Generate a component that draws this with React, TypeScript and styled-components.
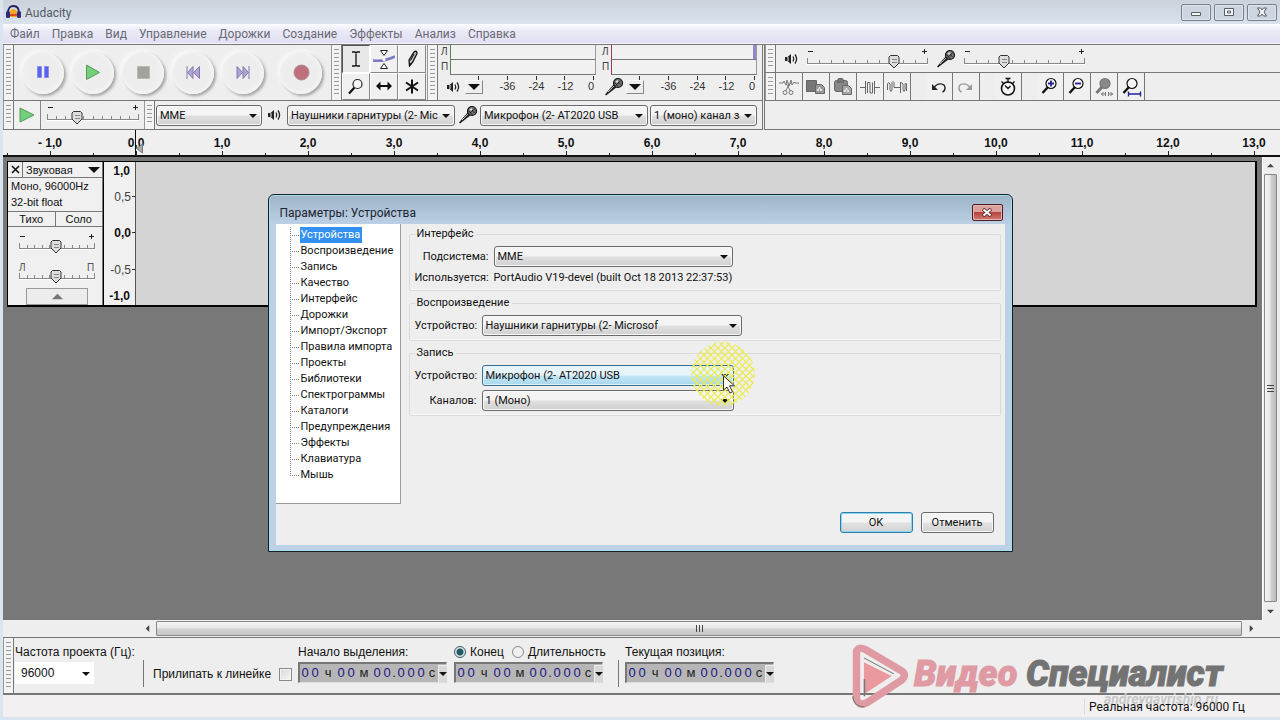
import React, { useState } from 'react';
import styled, { createGlobalStyle, css } from 'styled-components';

const UI_FONT = 'Roboto, "Noto Sans", sans-serif';
const ARIAL = '"Liberation Sans", Arial, sans-serif';

const GlobalStyle = createGlobalStyle`
  *, *::before, *::after { box-sizing: border-box; }
  body { margin: 0; background: #dbe5f0; color: #111; font: 12px/16px ${ARIAL}; }
  button, input, select { font: inherit; color: inherit; margin: 0; }
`;

const Window = styled.div`
  position: relative;
  display: flex;
  flex-direction: column;
  min-height: 100vh;
  padding: 0 0 3px 3px;
  overflow: hidden;
  background: #dbe5f0;
`;

const TitleBar = styled.header`
  display: flex;
  align-items: center;
  gap: 4px;
  height: 24px;
  padding: 0 3px 0 3px;
  background: linear-gradient(#cbd2dc, #d9e2ed);
  font: 12px/16px ${UI_FONT};
  color: #555a62;
`;

const AppTitle = styled.h1`
  flex: 1;
  margin: 0;
  padding-top: 2px;
  font: inherit;
`;

const WindowButtons = styled.div`
  display: flex;
  gap: 3px;
`;

const WindowButton = styled.button`
  display: grid;
  place-items: center;
  width: 30px;
  height: 17px;
  padding: 0;
  border: 1px solid #77808d;
  border-radius: 2px;
  background: #ccd5e0;
  box-shadow: inset 0 0 0 1px #dde4ec;
`;

const MenuBar = styled.nav`
  display: flex;
  gap: 12px;
  height: 20px;
  padding: 2px 7px 0;
  border-bottom: 1px solid #f4f4f8;
  background: linear-gradient(#fbfcff 0, #e9e9f6 40%, #e1dff2);
  font: 12px/16px ${UI_FONT};
`;

const MenuLink = styled.a`
  color: #6a6a74;
  text-decoration: none;
`;

const Docks = styled.div`
  display: flex;
  background: #eee;
  border-top: 1px solid #777;
`;

const Dock = styled.div<{ $grow?: boolean }>`
  display: flex;
  flex-direction: column;
  flex: ${(p) => (p.$grow ? '1' : 'none')};
  ${(p) => p.$grow && css`border-left: 3px double #777;`}
`;

const Bar = styled.div<{ $h: number }>`
  display: flex;
  height: ${(p) => p.$h}px;
  border-bottom: 1px solid #777;
`;

const Grip = styled.div`
  flex: none;
  width: 11px;
  border-left: 1px solid #999;
  border-right: 1px solid #777;
  background: repeating-linear-gradient(#999 0 1px, transparent 1px 4px) center 4px / 5px calc(100% - 8px) no-repeat #f3f3f3;
`;

const Transport = styled.div`
  display: flex;
  align-items: center;
  gap: 8px;
  width: 317px;
  padding-left: 8px;
  background: #eee;
`;

const RoundButton = styled.button<{ $apart?: boolean }>`
  display: grid;
  place-items: center;
  width: 42px;
  height: 42px;
  margin-left: ${(p) => (p.$apart ? 8 : 0)}px;
  padding: 0;
  border: 0;
  border-radius: 50%;
  background: radial-gradient(circle at 48% 48%, #ededed 55%, #f2f2f2 66%);
  box-shadow: 2px 2px 3px #a4a4a4, -2px -2px 4px #fafafa;
`;

const ToolGrid = styled.div`
  display: grid;
  grid-template-columns: repeat(3, 28px);
  width: 85px;
`;

const ToolButton = styled.button<{ $down?: boolean }>`
  display: grid;
  place-items: center;
  padding: 0;
  border: 1px solid;
  border-color: ${(p) => (p.$down ? '#555 #fff #fff #555' : '#fff #888 #888 #fff')};
  background: ${(p) => (p.$down ? '#e8e8e8' : '#f0f0f0')};
`;

const Meters = styled.div`
  display: flex;
  gap: 6px;
  padding: 0 5px 0 3px;
`;

const Meter = styled.section`
  width: 155px;
`;

const MeterLine = styled.div`
  display: flex;
  height: 15px;
  font-size: 10px;
  line-height: 14px;
  color: #444;
`;

const MeterLabel = styled.span`
  width: 9px;
`;

const MeterTrack = styled.span<{ $tone: string; $peak?: boolean }>`
  flex: 1;
  border: solid;
  border-width: 0 1px 1px;
  border-color: #777 #999 #777 ${(p) => p.$tone};
  background: #f1f1f1;
  ${(p) => p.$peak && css`box-shadow: inset -3px 0 #8f8ac8;`}
`;

const MeterTicks = styled.div`
  display: flex;
  justify-content: space-between;
  height: 5px;
  padding: 1px 2px 0 37px;
`;

const MeterTick = styled.i`
  width: 1px;
  background: #333;
`;

const MeterFoot = styled.div`
  display: flex;
  align-items: center;
  height: 14px;
  font-size: 11px;
  line-height: 14px;
  color: #333;
`;

const MeterIcon = styled.span`
  display: grid;
  place-items: center;
  flex: none;
  width: 24px;
`;

const MeterMenu = styled.button`
  display: grid;
  place-items: center;
  flex: none;
  width: 18px;
  height: 14px;
  margin-right: 10px;
  padding: 0;
  border: 1px solid;
  border-color: #f8f8f8 #888 #888 #f8f8f8;
  background: #eee;
`;

const MeterValue = styled.span<{ $last?: boolean }>`
  flex: none;
  align-self: flex-start;
  width: ${(p) => (p.$last ? 22 : 29)}px;
  line-height: 12px;
  text-align: center;
`;

const Mixer = styled.div`
  display: flex;
  align-items: center;
  gap: 7px;
  padding-left: 8px;
`;

const SliderBox = styled.label`
  position: relative;
  display: block;
  flex: none;
`;

const SliderInput = styled.input`
  position: absolute;
  inset: 0;
  width: 100%;
  height: 100%;
  opacity: 0;
`;

const EditTools = styled.div`
  display: flex;
  gap: 15px;
`;

const EditGroup = styled.div`
  display: flex;
`;

const EditButton = styled.button`
  display: grid;
  place-items: center;
  width: 27px;
  height: 27px;
  padding: 0;
  border: 0;
  border-right: 1px solid #777;
  background: #f0f0f0;
`;

const PlayAtSpeed = styled.button`
  display: grid;
  place-items: center;
  width: 27px;
  padding: 0;
  border: 0;
  border-right: 1px solid #888;
  background: #f0f0f0;
`;

const SpeedArea = styled.div`
  display: flex;
  align-items: center;
  width: 103px;
  padding-left: 5px;
`;

const DeviceArea = styled.div`
  display: flex;
  align-items: center;
  gap: 2px;
  padding: 0 5px 0 1px;
`;

const IconSlot = styled.span`
  display: grid;
  place-items: center;
  width: 21px;
`;

const SelectBox = styled.span<{ $w: number }>`
  position: relative;
  display: block;
  flex: none;
  width: ${(p) => p.$w}px;
  height: 21px;
  &::after {
    content: '';
    position: absolute;
    top: 9px;
    right: 5px;
    border: solid transparent;
    border-width: 4px 4px 0;
    border-top-color: #111;
    pointer-events: none;
  }
`;

const SelectInput = styled.select<{ $hot?: boolean }>`
  appearance: none;
  width: 100%;
  height: 21px;
  padding: 0 16px 0 3px;
  border: 1px solid ${(p) => (p.$hot ? '#3c6f8f' : '#6b6b6b')};
  border-radius: 3px;
  background: ${(p) =>
    p.$hot
      ? 'linear-gradient(#e6f5fc 0 48%, #c2e5f5 52%, #a9d8ef)'
      : 'linear-gradient(#f4f4f4 0 48%, #e0e0e0 52%, #d0d0d0)'};
  box-shadow: inset 0 0 0 1px ${(p) => (p.$hot ? '#dff3fb' : '#f8f8f8')};
  font: 11px/17px ${UI_FONT};
  overflow: hidden;
`;

const Ruler = styled.div`
  display: flex;
  height: 27px;
  padding-left: 4px;
  overflow: hidden;
  border-bottom: 2px solid #111;
  background: #efefef;
  font: bold 12px/16px ${ARIAL};
`;

const RulerCell = styled.div`
  position: relative;
  flex: none;
  width: 86px;
  padding-top: 5px;
  text-align: center;
  background:
    linear-gradient(#222, #222) left bottom / 1px 2px no-repeat,
    linear-gradient(#222, #222) center bottom / 1px 4px no-repeat;
`;

const PlayHead = styled.svg`
  position: absolute;
  left: 40px;
  top: 0;
`;

const Workspace = styled.main`
  display: flex;
  flex: 1;
  background: #eee;
`;

const Canvas = styled.div`
  flex: 1;
  padding: 4px 5px 0 4px;
  background: #787878;
`;

const Track = styled.section`
  display: flex;
  height: 146px;
  border: solid #000;
  border-width: 1px 2px 2px 1px;
  background: #f0f0f0;
`;

const TrackPanel = styled.div`
  width: 95px;
  border-right: 1px solid #777;
`;

const TrackHead = styled.div`
  display: flex;
  height: 16px;
  border-bottom: 1px solid #777;
`;

const TrackClose = styled.button`
  display: grid;
  place-items: center;
  width: 15px;
  padding: 0;
  border: 0;
  border-right: 1px solid #777;
  background: #f0f0f0;
`;

const TrackMenu = styled.button`
  display: flex;
  flex: 1;
  align-items: center;
  justify-content: space-between;
  padding: 0 2px 0 3px;
  border: 0;
  background: #f0f0f0;
  font-size: 11px;
  line-height: 14px;
`;

const TrackInfo = styled.p`
  margin: 0;
  padding: 0 3px;
  height: 33px;
  font-size: 11px;
  line-height: 16px;
`;

const MuteSolo = styled.div`
  display: flex;
  height: 16px;
  border: solid #777;
  border-width: 1px 0;
`;

const MuteButton = styled.button`
  flex: 1;
  padding: 0;
  border: 0;
  background: #f0f0f0;
  font-size: 11px;
  line-height: 14px;
  & + & { border-left: 1px solid #777; }
`;

const TrackSliders = styled.div`
  display: flex;
  flex-direction: column;
  align-items: center;
  gap: 6px;
  height: 61px;
  padding: 5px 0 0 4px;
`;

const Collapse = styled.button`
  display: grid;
  place-items: center;
  width: 62px;
  height: 17px;
  margin: 0 14px 0 auto;
  padding: 0;
  border: 1px solid #999;
  background: #ececec;
`;

const VRuler = styled.div`
  display: grid;
  grid-template-rows: 17px 1fr 1fr 1fr 17px;
  align-items: center;
  width: 33px;
  border-left: 1px solid #000;
  border-right: 1px solid #555;
  font-size: 12px;
`;

const VMark = styled.span<{ $strong?: boolean; $tick?: boolean }>`
  padding-right: ${(p) => (p.$tick ? 0 : 5)}px;
  text-align: right;
  font-weight: ${(p) => (p.$strong ? 'bold' : 'normal')};
  color: ${(p) => (p.$strong ? '#111' : '#444')};
  &::after {
    content: '';
    display: ${(p) => (p.$tick ? 'inline-block' : 'none')};
    width: 3px;
    height: 1px;
    margin-left: 1px;
    vertical-align: 4px;
    background: #333;
  }
`;

const Wave = styled.div`
  flex: 1;
  background: #d4d4d4;
`;

const VScroll = styled.div`
  display: flex;
  flex-direction: column;
  width: 18px;
  padding: 0 3px 0 1px;
  border-left: 1px solid #fff;
`;

const ScrollButton = styled.button<{ $size: number; $across?: boolean }>`
  display: grid;
  place-items: center;
  flex: none;
  width: ${(p) => (p.$across ? p.$size + 'px' : '100%')};
  height: ${(p) => (p.$across ? '100%' : p.$size + 'px')};
  padding: 0;
  border: 0;
  background: none;
`;

const VThumb = styled.div`
  display: grid;
  place-items: center;
  flex: 1;
  border: 1px solid #888;
  border-radius: 1px;
  background: linear-gradient(90deg, #f6f6f6, #e6e6e6 45%, #cfcfcf 55%, #bdbdbd);
`;

const HScroll = styled.div`
  display: flex;
  height: 17px;
  padding: 1px 19px 1px 136px;
  background: #eee;
`;

const HThumb = styled.div`
  display: grid;
  place-items: center;
  flex: 1;
  border: 1px solid #888;
  border-radius: 1px;
  background: linear-gradient(#f6f6f6, #e6e6e6 45%, #d2d2d2 55%, #c4c4c4);
`;

const SelectionBar = styled.form`
  display: flex;
  height: 58px;
  border-top: 1px solid #777;
  border-bottom: 2px solid #777;
  background: #eee;
`;

const Field = styled.div<{ $w?: number; $ml?: number }>`
  display: flex;
  flex-direction: column;
  gap: 2px;
  width: ${(p) => (p.$w ? p.$w + 'px' : 'auto')};
  margin-left: ${(p) => p.$ml || 0}px;
  padding-top: 6px;
`;

const FieldTitle = styled.label`
  font-size: 12px;
  line-height: 16px;
  white-space: nowrap;
`;

const RadioRow = styled.div`
  display: flex;
  gap: 8px;
`;

const Radio = styled.label`
  display: flex;
  align-items: center;
  gap: 4px;
  line-height: 16px;
`;

const RadioInput = styled.input`
  appearance: none;
  width: 12px;
  height: 12px;
  border: 1px solid #8b8b8b;
  border-radius: 50%;
  background: #f0f0f0;
  &:checked {
    border-color: #3d5560;
    background: radial-gradient(circle, #1f5a66 0 3px, #dfe9ec 4px);
  }
`;

const Divider = styled.span`
  align-self: flex-start;
  width: 1px;
  height: 27px;
  margin-top: 22px;
  background: #777;
`;

const Snap = styled.label`
  display: flex;
  align-items: center;
  gap: 8px;
  height: 20px;
  margin: 26px 0 0 9px;
  white-space: nowrap;
`;

const Check = styled.input`
  appearance: none;
  width: 13px;
  height: 13px;
  border: 1px solid #8a8a8a;
  background: linear-gradient(135deg, #d8d8d8, #f8f8f8);
  box-shadow: inset 0 0 0 1px #f4f4f4;
`;

const RateBox = styled.span`
  position: relative;
  width: 79px;
  &::after {
    content: '';
    position: absolute;
    top: 10px;
    right: 4px;
    border: solid transparent;
    border-width: 4px 4px 0;
    border-top-color: #111;
    pointer-events: none;
  }
`;

const RateSelect = styled.select`
  appearance: none;
  width: 100%;
  height: 22px;
  padding: 0 6px;
  border: 0;
  background: #fff;
  font-size: 12px;
  line-height: 22px;
`;

const TimeBox = styled.div`
  display: flex;
  align-items: center;
  width: 149px;
  height: 21px;
  border: solid;
  border-width: 2px 1px 1px 2px;
  border-color: #777 #ddd #ddd #777;
  background: #b6b6b6;
  font-size: 13px;
  line-height: 18px;
`;

const TimeCell = styled.span<{ $kind: 'digit' | 'unit' | 'dot' | 'end' }>`
  flex: none;
  width: ${(p) => ({ digit: 10, unit: 16, dot: 4, end: 12 })[p.$kind]}px;
  text-align: center;
  color: ${(p) => (p.$kind === 'digit' ? '#1d1585' : '#222')};
`;

const TimeMenu = styled.button`
  display: grid;
  place-items: center;
  flex: none;
  width: 9px;
  height: 17px;
  margin-left: auto;
  padding: 0;
  border: 1px solid #eee;
  border-width: 1px 0 0 1px;
  background: #d8d8d8;
`;

const StatusBar = styled.footer`
  display: flex;
  align-items: center;
  justify-content: flex-end;
  height: 22px;
  padding-top: 2px;
  background: #f2f0f0;
  font: 12px/16px ${UI_FONT};
`;

const StatusCell = styled.span`
  position: relative;
  z-index: 1;
  width: 196px;
  padding-left: 4px;
  border-left: 1px solid #ddd;
`;

const DialogLayer = styled.div`
  position: absolute;
  inset: 194px 0 auto 0;
  display: flex;
  justify-content: center;
`;

const Dialog = styled.section`
  width: 745px;
  padding: 0 7px 6px;
  border: 1px solid #14202a;
  border-radius: 6px 6px 0 0;
  background: linear-gradient(#9fb4c8, #bdd1e6 30px, #bdd1e6);
  box-shadow: inset 0 0 0 1px #a9dbe8;
  font: 11px/16px ${UI_FONT};
`;

const DialogHead = styled.header`
  display: flex;
  align-items: center;
  justify-content: space-between;
  height: 29px;
  padding: 6px 2px 0 4px;
`;

const DialogTitle = styled.h2`
  margin: 0;
  font: 12px/16px ${UI_FONT};
  color: #1c2530;
`;

const DialogClose = styled.button`
  display: grid;
  place-items: center;
  width: 31px;
  height: 17px;
  padding: 0;
  border: 1px solid #4b1f22;
  border-radius: 2px;
  background: linear-gradient(#dba19d 0 45%, #b9433d 50%, #cf7a72);
  box-shadow: inset 0 0 0 1px #e5b5b1;
`;

const DialogBody = styled.div`
  display: flex;
  flex-direction: column;
  height: 321px;
  background: #eee;
`;

const DialogPanes = styled.div`
  display: flex;
  gap: 8px;
`;

const Tree = styled.ul`
  width: 125px;
  height: 280px;
  margin: 0;
  padding: 3px 0 0 14px;
  list-style: none;
  border: solid #9a9a9a;
  border-width: 0 1px 1px 0;
  background: #fff;
`;

const TreeItem = styled.li<{ $last?: boolean }>`
  display: flex;
  align-items: center;
  gap: 1px;
  height: 16px;
  background: repeating-linear-gradient(#888 0 1px, transparent 1px 2px) left top / 1px ${(p) =>
      p.$last ? '9px' : '16px'} no-repeat;
  &::before {
    content: '';
    width: 9px;
    height: 1px;
    background: repeating-linear-gradient(90deg, #888 0 1px, transparent 1px 2px);
  }
`;

const TreeLink = styled.a<{ $on?: boolean }>`
  padding: 0 2px 0 1px;
  color: ${(p) => (p.$on ? '#fff' : '#111')};
  background: ${(p) => (p.$on ? '#3390f0' : 'transparent')};
  text-decoration: none;
  white-space: nowrap;
`;

const Groups = styled.div`
  display: flex;
  flex-direction: column;
  flex: 1;
  gap: 4px;
  padding: 2px 4px 0 0;
`;

const Group = styled.fieldset<{ $tight?: boolean }>`
  display: flex;
  flex-direction: column;
  gap: ${(p) => (p.$tight ? 3 : 4)}px;
  min-width: 0;
  margin: 0;
  padding: 4px 5px 4px 5px;
  border: 1px solid #dadada;
  border-radius: 2px;
  box-shadow: inset 0 -1px #f8f8f8;
`;

const Legend = styled.legend`
  padding: 0 3px 0 2px;
  line-height: 16px;
`;

const Row = styled.div`
  position: relative;
  display: flex;
  align-items: center;
  gap: 5px;
`;

const RowLabel = styled.label<{ $w: number }>`
  width: ${(p) => p.$w}px;
  text-align: right;
  white-space: nowrap;
`;

const Halo = styled.svg`
  position: absolute;
  left: 275px;
  top: -49px;
  pointer-events: none;
`;

const DialogButtons = styled.div`
  display: flex;
  justify-content: flex-end;
  gap: 8px;
  margin-top: auto;
  padding: 0 11px 12px 0;
`;

const PushButton = styled.button<{ $main?: boolean }>`
  width: 73px;
  height: 21px;
  padding: 0;
  border: 1px solid ${(p) => (p.$main ? '#2b7fa8' : '#6b6b6b')};
  border-radius: 3px;
  background: linear-gradient(#f4f4f4 0 48%, #e2e2e2 52%, #d2d2d2);
  box-shadow: inset 0 0 0 1px ${(p) => (p.$main ? '#8fd4ee' : '#f8f8f8')};
`;

const Watermark = styled.div`
  position: absolute;
  right: 57px;
  bottom: 12px;
  display: flex;
  align-items: flex-start;
  width: 371px;
  pointer-events: none;
`;

const Brand = styled.div`
  flex: 1;
  display: flex;
  flex-wrap: wrap;
  justify-content: space-between;
  padding: 14px 0 0 4px;
  font: italic 900 36px/32px Roboto, ${ARIAL};
`;

const BrandWord = styled.span<{ $c: string }>`
  color: ${(p) => p.$c};
  -webkit-text-stroke: 1px ${(p) => p.$c};
`;

const BrandSite = styled.span`
  width: 100%;
  padding-right: 5px;
  text-align: right;
  font: italic bold 14px/18px ${UI_FONT};
  color: #c8c8ca;
`;

type SliderProps = { w: number; value: number; label: string; ends?: [string, string]; ticks?: number };

function Slider({ w, value, label, ends = ['-', '+'], ticks = 11 }: SliderProps) {
  const [v, setV] = useState(value);
  const inner = w - 4;
  const x = Math.round(2 + (inner * v) / 100);
  const letters = ends[0] !== '-';
  return (
    <SliderBox>
      <svg width={w} height="24" viewBox={`0 0 ${w} 24`} style={{ display: 'block' }}>
        {letters ? (
          <g fontSize="10" fontFamily="Liberation Sans" fill="#555">
            <text x="1" y="9">{ends[0]}</text>
            <text x={w - 9} y="9">{ends[1]}</text>
          </g>
        ) : (
          <path d={`M2 4.500h5M${w - 7} 4.500h5M${w - 4.5} 2v5`} stroke="#222" />
        )}
        {Array.from({ length: ticks }, (_, i) => {
          const tx = Math.round(1 + ((w - 3) * i) / (ticks - 1)) + 0.5;
          const h = i === 0 || i === ticks - 1 ? 5 : 3;
          return <path key={i} d={`M${tx} ${16 - h}v${h}`} stroke="#888" />;
        })}
        <path d={`M1 16.500h${w - 2}`} stroke="#888" />
        <path d={`M1 17.500h${w - 2}`} stroke="#fff" />
        <path
          d={`M${x - 3.5} 8.500h7l1.500 1.500v6l-5 5l-5-5v-6z`}
          fill="#dcdcdc"
          stroke="#333"
        />
        <path d={`M${x - 2} 12.500h5M${x - 2} 15.500h5`} stroke="#888" />
      </svg>
      <SliderInput type="range" aria-label={label} value={v} onChange={(e) => setV(+e.target.value)} />
    </SliderBox>
  );
}

type DropProps = { w: number; value: string; label?: string; id?: string; hot?: boolean };

function Drop({ w, value, label, id, hot }: DropProps) {
  return (
    <SelectBox $w={w}>
      <SelectInput id={id} aria-label={label} $hot={hot}>
        <option>{value}</option>
      </SelectInput>
    </SelectBox>
  );
}

function Arrow({ dir = 'down', size = 9, color = '#111' }: { dir?: string; size?: number; color?: string }) {
  const turn = { down: 0, left: 90, up: 180, right: 270 }[dir];
  return (
    <svg width={size} height={size} viewBox="0 0 10 10" style={{ display: 'block' }}>
      <path d="M0 2.500h10l-5 5z" fill={color} transform={`rotate(${turn} 5 5)`} />
    </svg>
  );
}

const Speaker = () => (
  <svg width="15" height="14" viewBox="0 0 15 14">
    <path d="M1 5h2.500l3.500-3v10l-3.500-3H1z" fill="#222" />
    <path d="M4 5v4" stroke="#eee" />
    <path d="M9 4.500q1.500 2.500 0 5M11 2.500q3.200 4.500 0 9" fill="none" stroke="#222" strokeWidth="1.300" />
  </svg>
);

const Mic = () => (
  <svg width="20" height="20" viewBox="0 0 20 20">
    <path d="M10 7L1 17.500l1 1L13 10z" fill="#222" />
    <path d="M10.500 8.500L4 15" stroke="#bbb" strokeWidth="1" />
    <circle cx="14" cy="6" r="4.500" fill="#777" stroke="#111" strokeWidth="1.200" />
    <path d="M10.500 5.500l4 4.500M12 3l5 5.500M11.500 8.500l5.500-5" stroke="#111" strokeWidth=".8" />
    <circle cx="13" cy="4.500" r="1.200" fill="#ddd" />
  </svg>
);

const Lens = ({ mark, gray }: { mark?: 'plus' | 'minus' | 'sel' | 'fit'; gray?: boolean }) => {
  const c = gray ? '#777' : '#111';
  return (
    <svg width="22" height="22" viewBox="0 0 22 22">
      <path d="M9 11L3.500 17" stroke={c} strokeWidth={gray ? 3 : 2.400} />
      <circle cx="12" cy="7.500" r="5" fill={gray ? '#8a8a8a' : '#f6f6f6'} stroke={c} strokeWidth="1.200" />
      {mark === 'plus' && <path d="M9 7.500h6M12 4.500v6" stroke="#26229a" strokeWidth="1.800" />}
      {mark === 'minus' && <path d="M9 7.500h6" stroke="#26229a" strokeWidth="1.800" />}
      {mark === 'sel' && (
        <path d="M8 18h5M10.500 16l-2 2l2 2M15 18h5M17.500 16l2 2l-2 2M12.500 16v4M15.500 16v4" stroke="#777" fill="none" />
      )}
      {mark === 'fit' && <path d="M8.500 18h12M8.500 15.500v5M20.500 15.500v5" stroke="#26229a" strokeWidth="1.400" />}
    </svg>
  );
};

const transportIcons: { label: string; art: React.ReactNode }[] = [
  { label: 'Пауза', art: <path d="M3.500 3.500h4v11h-4zM10.500 3.500h4v11h-4z" fill="#5b61e8" stroke="#8c90ee" /> },
  { label: 'Воспроизвести', art: <path d="M2.500 2l13 7.500l-13 7z" fill="#72cf7c" stroke="#539a5b" /> },
  { label: 'Остановить', art: <path d="M3.500 3.500h12v12h-12z" fill="#a3a39d" stroke="#b9b9b4" /> },
  {
    label: 'К началу',
    art: <path d="M3 3v13M9 3.500v12l-5.500-6zM15.500 3.500v12l-6-6z" fill="#b0a3d4" stroke="#8578b0" />,
  },
  {
    label: 'К концу',
    art: <path d="M15 3v13M3 3.500v12l5.500-6zM9 3.500v12l5.500-6z" fill="#b0a3d4" stroke="#8578b0" />,
  },
  { label: 'Записать', art: <circle cx="9.500" cy="9.500" r="7.500" fill="#c0707c" stroke="#a98a90" /> },
];

const tools: { label: string; art: React.ReactNode }[] = [
  { label: 'Выделение', art: <path d="M7 4h3l1 1l1-1h3M7 18h3l1-1l1 1h3M11 4.500v13" stroke="#111" strokeWidth="1.300" fill="none" /> },
  {
    label: 'Изменение огибающей',
    art: (
      <>
        <path d="M0 12.500c8 1 14 0 22-4" stroke="#7b78c4" strokeWidth="2.600" fill="none" />
        <path d="M7.500 2.500h7l-3.500 5zM7.500 20.500h7l-3.500-5z" fill="#fff" stroke="#222" />
        <circle cx="11" cy="11.500" r="1.500" fill="#fff" />
      </>
    ),
  },
  {
    label: 'Изменение семплов',
    art: (
      <>
        <path d="M8 12l5-8q3-2 3 1.500l-4.500 9L8.500 18z" fill="#bbb" stroke="#111" strokeWidth="1.300" />
        <path d="M13 6l-3.500 6.500M8.500 18l1-3" stroke="#111" />
      </>
    ),
  },
  {
    label: 'Масштабирование',
    art: (
      <>
        <path d="M9.500 12.500L4 18.500" stroke="#111" strokeWidth="2.200" />
        <circle cx="12.500" cy="9" r="4.500" fill="#f8f8f8" stroke="#222" strokeWidth="1.200" />
      </>
    ),
  },
  { label: 'Перемещение', art: <path d="M3 11l4.500-4.500v3.500h7V6.500L19 11l-4.500 4.500v-3.500h-7v3.500z" fill="#111" /> },
  { label: 'Мультиинструмент', art: <path d="M11 4.500v14M5 7.500l12 8M17 7.500l-12 8" stroke="#111" strokeWidth="2" /> },
];

const editGroups: { label: string; art: React.ReactNode }[][] = [
  [
    {
      label: 'Вырезать',
      art: (
        <svg width="22" height="22" viewBox="0 0 22 22" fill="none" stroke="#777">
          <path d="M1 7h4l1-2l2 4l1-5l2 6l2-6l1 5l2-3l1 1h4M12.500 7l-5 8M8.500 8l4 7" />
          <circle cx="7" cy="16.500" r="2" />
          <circle cx="13" cy="16.500" r="2" />
        </svg>
      ),
    },
    {
      label: 'Копировать',
      art: (
        <svg width="22" height="22" viewBox="0 0 22 22">
          <path d="M1.500 4.500h10v11h-10z" fill="#777" stroke="#666" />
          <path d="M10.500 8.500h6l3 3v6h-9z" fill="#999" stroke="#666" />
          <path d="M12 13l1 2l1.500-4l1.500 4l1-2" stroke="#eee" fill="none" />
        </svg>
      ),
    },
    {
      label: 'Вставить',
      art: (
        <svg width="22" height="22" viewBox="0 0 22 22">
          <rect x="2.500" y="4.500" width="13" height="11" rx="2" fill="#888" stroke="#666" />
          <path d="M5.500 4.500l1-2h4l1 2v2h-6z" fill="#777" stroke="#666" />
          <path d="M10.500 9.500h6l3 3v6h-9z" fill="#a5a5a5" stroke="#666" />
          <path d="M12 14l1 2l1.500-4l1.500 4l1-2" stroke="#eee" fill="none" />
        </svg>
      ),
    },
    {
      label: 'Обрезать',
      art: (
        <svg width="22" height="22" viewBox="0 0 22 22" fill="none" stroke="#666">
          <path d="M1 11.500h5M16 11.500h5M6.500 5v13M15.500 5v13M8.500 17V6.500h2.500V17h2.500V6.500" />
        </svg>
      ),
    },
    {
      label: 'Заглушить',
      art: (
        <svg width="22" height="22" viewBox="0 0 22 22" fill="none" stroke="#666">
          <path d="M1.500 14V8q1-3 2.500 0v6q1 3 2 0V6.500q1-2 2 0v5h6M14.500 6v11M14.500 8q1-3 2.500 0v6q1 3 2 0V8q.8-2 1.500 0v7" />
        </svg>
      ),
    },
  ],
  [
    {
      label: 'Отменить действие',
      art: (
        <svg width="22" height="22" viewBox="0 0 22 22" fill="none">
          <path d="M6 12c3-6 11-5 11 0q0 3-2.500 4" stroke="#222" strokeWidth="1.400" />
          <path d="M4 8v6h6z" fill="#222" />
        </svg>
      ),
    },
    {
      label: 'Повторить действие',
      art: (
        <svg width="22" height="22" viewBox="0 0 22 22" fill="none">
          <path d="M15 12c-3-6-11-5-11 0q0 3 2.500 4" stroke="#999" strokeWidth="1.400" />
          <path d="M17 8v6h-6z" fill="#999" />
        </svg>
      ),
    },
  ],
  [
    {
      label: 'Таймер',
      art: (
        <svg width="22" height="22" viewBox="0 0 22 22" fill="none" stroke="#111">
          <circle cx="11" cy="12.500" r="6.500" fill="#f4f4f4" strokeWidth="1.600" />
          <path d="M8.500 2.500h5M11 3v4M8 9.500l3 3l2.500-2.500M4.500 5.500l2 2M17.500 5.500l-2 2" strokeWidth="1.300" />
        </svg>
      ),
    },
  ],
  [
    { label: 'Приблизить', art: <Lens mark="plus" /> },
    { label: 'Отдалить', art: <Lens mark="minus" /> },
    { label: 'Уместить выделенное', art: <Lens mark="sel" gray /> },
    { label: 'Уместить проект', art: <Lens mark="fit" /> },
  ],
];

const menus = ['Файл', 'Правка', 'Вид', 'Управление', 'Дорожки', 'Создание', 'Эффекты', 'Анализ', 'Справка'];
const pages = [
  'Устройства', 'Воспроизведение', 'Запись', 'Качество', 'Интерфейс', 'Дорожки', 'Импорт/Экспорт', 'Правила импорта',
  'Проекты', 'Библиотеки', 'Спектрограммы', 'Каталоги', 'Предупреждения', 'Эффекты', 'Клавиатура', 'Мышь',
];

function LevelMeter({ name, tone, peak, icon }: { name: string; tone: string; peak?: boolean; icon: React.ReactNode }) {
  return (
    <Meter aria-label={name}>
      {['Л', 'П'].map((ch, i) => (
        <MeterLine key={ch}>
          <MeterLabel>{ch}</MeterLabel>
          <MeterTrack $tone={tone} $peak={peak && i === 0} />
        </MeterLine>
      ))}
      <MeterTicks>
        {[0, 1, 2, 3, 4].map((n) => <MeterTick key={n} />)}
      </MeterTicks>
      <MeterFoot>
        <MeterIcon>{icon}</MeterIcon>
        <MeterMenu aria-label={`${name}: меню`}><Arrow size={12} /></MeterMenu>
        {['-36', '-24', '-12', '0'].map((n) => <MeterValue key={n} $last={n === '0'}>{n}</MeterValue>)}
      </MeterFoot>
    </Meter>
  );
}

function TimeField({ label }: { label: string }) {
  const kind = (c: string) => (c === '.' ? 'dot' : /\d/.test(c) ? 'digit' : c === 'с' ? 'end' : 'unit');
  return (
    <TimeBox role="group" aria-label={label}>
      {Array.from('00ч00м00.000с').map((c, i) => <TimeCell key={i} $kind={kind(c)}>{c}</TimeCell>)}
      <TimeMenu type="button" aria-label={`${label}: формат`}><Arrow size={8} /></TimeMenu>
    </TimeBox>
  );
}

function Preferences() {
  return (
    <DialogLayer>
      <Dialog role="dialog" aria-labelledby="prefs-title">
        <DialogHead>
          <DialogTitle id="prefs-title">Параметры: Устройства</DialogTitle>
          <DialogClose aria-label="Закрыть">
            <svg width="12" height="9" viewBox="0 0 12 9">
              <path d="M2 1l8 7M10 1l-8 7" stroke="#5a2a2c" strokeWidth="3.600" />
              <path d="M2.500 1.500l7 6M9.500 1.500l-7 6" stroke="#fff" strokeWidth="2" />
            </svg>
          </DialogClose>
        </DialogHead>
        <DialogBody>
          <DialogPanes>
            <Tree>
              {pages.map((p, i) => (
                <TreeItem key={p} $last={i === pages.length - 1}>
                  <TreeLink href="#" $on={i === 0}>{p}</TreeLink>
                </TreeItem>
              ))}
            </Tree>
            <Groups>
              <Group $tight>
                <Legend>Интерфейс</Legend>
                <Row>
                  <RowLabel $w={74} htmlFor="host">Подсистема:</RowLabel>
                  <Drop id="host" w={239} value="MME" />
                </Row>
                <Row>
                  <RowLabel as="span" $w={74}>Используется:</RowLabel>
                  <span>PortAudio V19-devel (built Oct 18 2013 22:37:53)</span>
                </Row>
              </Group>
              <Group>
                <Legend>Воспроизведение</Legend>
                <Row>
                  <RowLabel $w={62} htmlFor="play-device">Устройство:</RowLabel>
                  <Drop id="play-device" w={260} value="Наушники гарнитуры (2- Microsof" />
                </Row>
              </Group>
              <Group>
                <Legend>Запись</Legend>
                <Row>
                  <RowLabel $w={62} htmlFor="rec-device">Устройство:</RowLabel>
                  <Drop id="rec-device" w={252} value="Микрофон (2- AT2020 USB" hot />
                </Row>
                <Row>
                  <RowLabel $w={62} htmlFor="channels">Каналов:</RowLabel>
                  <Drop id="channels" w={252} value="1 (Моно)" />
                  <Halo width="66" height="66" viewBox="0 0 66 66">
                    <defs>
                      <pattern id="hatch" width="7" height="7" patternUnits="userSpaceOnUse">
                        <path d="M0 0l7 7M7 0l-7 7" stroke="#ecec48" strokeWidth="1.200" />
                      </pattern>
                    </defs>
                    <circle cx="33" cy="33" r="32" fill="url(#hatch)" />
                    <path d="M33.500 35v14l3.500-3l3 6l2.500-1.200l-3-6h5z" fill="#fff" stroke="#333" />
                  </Halo>
                </Row>
              </Group>
            </Groups>
          </DialogPanes>
          <DialogButtons>
            <PushButton $main>OK</PushButton>
            <PushButton>Отменить</PushButton>
          </DialogButtons>
        </DialogBody>
      </Dialog>
    </DialogLayer>
  );
}

export default function App() {
  return (
    <Window>
      <GlobalStyle />
      <TitleBar>
        <svg width="15" height="14" viewBox="0 0 15 14">
          <path d="M4 6q3.500-4 7 0v6H4z" fill="#f5a623" />
          <path d="M4 9h7v2H4z" fill="#e0452a" />
          <path d="M2 8q0-7 5.500-7T13 8" fill="none" stroke="#23235c" strokeWidth="1.800" />
          <rect x="0" y="6" width="4" height="7" rx="1.500" fill="#2c2c78" />
          <rect x="11" y="6" width="4" height="7" rx="1.500" fill="#2c2c78" />
        </svg>
        <AppTitle>Audacity</AppTitle>
        <WindowButtons>
          <WindowButton aria-label="Свернуть">
            <svg width="12" height="10" viewBox="0 0 12 10"><path d="M1.500 5.500h9v3h-9z" fill="#f4f4f4" stroke="#555d6a" /></svg>
          </WindowButton>
          <WindowButton aria-label="Развернуть">
            <svg width="12" height="10" viewBox="0 0 12 10">
              <path d="M1.500 1.500h9v7h-9z" fill="#f4f4f4" stroke="#555d6a" />
              <path d="M4.500 4h3v2h-3z" fill="#f4f4f4" stroke="#555d6a" />
            </svg>
          </WindowButton>
          <WindowButton aria-label="Закрыть окно">
            <svg width="12" height="10" viewBox="0 0 12 10">
              <path d="M1.500 1h3L6 3l1.500-2h3L8 5l2.500 4h-3L6 7L4.500 9h-3L4 5z" fill="#f4f4f4" stroke="#555d6a" />
            </svg>
          </WindowButton>
        </WindowButtons>
      </TitleBar>
      <MenuBar>
        {menus.map((m) => <MenuLink key={m} href="#">{m}</MenuLink>)}
      </MenuBar>

      <Docks>
        <Dock>
          <Bar $h={56}>
            <Grip />
            <Transport>
              {transportIcons.map((b, i) => (
                <RoundButton key={b.label} aria-label={b.label} $apart={i === 5}>
                  <svg width="19" height="19" viewBox="0 0 19 19">{b.art}</svg>
                </RoundButton>
              ))}
            </Transport>
            <Grip />
            <ToolGrid>
              {tools.map((t, i) => (
                <ToolButton key={t.label} aria-label={t.label} $down={i === 0}>
                  <svg width="22" height="22" viewBox="0 0 22 22">{t.art}</svg>
                </ToolButton>
              ))}
            </ToolGrid>
            <Grip />
            <Meters>
              <LevelMeter name="Уровень воспроизведения" tone="#4f8a4f" icon={<Speaker />} />
              <LevelMeter name="Уровень записи" tone="#a03c4c" peak icon={<Mic />} />
            </Meters>
          </Bar>
          <Bar $h={29}>
            <Grip />
            <PlayAtSpeed aria-label="Воспроизвести с выбранной скоростью">
              <svg width="18" height="18" viewBox="0 0 18 18"><path d="M2 2l14 7l-14 7z" fill="#72cf7c" stroke="#539a5b" /></svg>
            </PlayAtSpeed>
            <SpeedArea>
              <Slider w={94} value={32} label="Скорость воспроизведения" />
            </SpeedArea>
            <Grip />
            <DeviceArea>
              <Drop w={106} value="MME" label="Подсистема звука" />
              <IconSlot><Speaker /></IconSlot>
              <Drop w={168} value="Наушники гарнитуры (2- Microsof" label="Устройство воспроизведения" />
              <IconSlot><Mic /></IconSlot>
              <Drop w={168} value="Микрофон (2- AT2020 USB" label="Устройство записи" />
              <Drop w={107} value="1 (моно) канал записи" label="Каналы записи" />
            </DeviceArea>
          </Bar>
        </Dock>
        <Dock $grow>
          <Bar $h={28}>
            <Grip />
            <Mixer>
              <Speaker />
              <Slider w={123} value={72} label="Громкость воспроизведения" />
              <Mic />
              <Slider w={123} value={33} label="Громкость записи" />
            </Mixer>
          </Bar>
          <Bar $h={28}>
            <Grip />
            <EditTools>
              {editGroups.map((g, i) => (
                <EditGroup key={i}>
                  {g.map((b) => <EditButton key={b.label} aria-label={b.label}>{b.art}</EditButton>)}
                </EditGroup>
              ))}
            </EditTools>
          </Bar>
          <Bar $h={29} />
        </Dock>
      </Docks>

      <Ruler>
        {Array.from({ length: 15 }, (_, i) => (
          <RulerCell key={i}>
            {i === 0 ? '- 1,0' : `${i - 1},0`}
            {i === 1 && (
              <PlayHead width="12" height="26" viewBox="0 0 12 26">
                <path d="M2.500 0v26" stroke="#111" />
                <path d="M9.500 14v9l-6-4.500z" fill="#aaa" stroke="#777" />
              </PlayHead>
            )}
          </RulerCell>
        ))}
      </Ruler>

      <Workspace>
        <Canvas>
          <Track>
            <TrackPanel>
              <TrackHead>
                <TrackClose aria-label="Закрыть дорожку">
                  <svg width="9" height="9" viewBox="0 0 9 9"><path d="M1 1l7 7M8 1l-7 7" stroke="#111" strokeWidth="1.600" /></svg>
                </TrackClose>
                <TrackMenu>Звуковая <Arrow size={12} /></TrackMenu>
              </TrackHead>
              <TrackInfo>Моно, 96000Hz<br />32-bit float</TrackInfo>
              <MuteSolo>
                <MuteButton>Тихо</MuteButton>
                <MuteButton>Соло</MuteButton>
              </MuteSolo>
              <TrackSliders>
                <Slider w={78} value={49} label="Усиление" />
                <Slider w={78} value={49} label="Панорама" ends={['Л', 'П']} />
              </TrackSliders>
              <Collapse aria-label="Свернуть дорожку"><Arrow dir="up" size={11} color="#777" /></Collapse>
            </TrackPanel>
            <VRuler>
              <VMark $strong>1,0</VMark>
              <VMark $tick>0,5</VMark>
              <VMark $strong $tick>0,0</VMark>
              <VMark $tick>-0,5</VMark>
              <VMark $strong>-1,0</VMark>
            </VRuler>
            <Wave />
          </Track>
        </Canvas>
        <VScroll>
          <ScrollButton $size={17} aria-label="Вверх"><Arrow dir="up" size={7} color="#444" /></ScrollButton>
          <VThumb>
            <svg width="7" height="8" viewBox="0 0 7 8"><path d="M0 1.500h7M0 4.500h7M0 7.500h7" stroke="#444" /></svg>
          </VThumb>
          <ScrollButton $size={18} aria-label="Вниз"><Arrow size={7} color="#444" /></ScrollButton>
        </VScroll>
      </Workspace>
      <HScroll>
        <ScrollButton $size={17} $across aria-label="Влево"><Arrow dir="left" size={7} color="#444" /></ScrollButton>
        <HThumb>
          <svg width="8" height="7" viewBox="0 0 8 7"><path d="M1.500 0v7M4.500 0v7M7.500 0v7" stroke="#444" /></svg>
        </HThumb>
        <ScrollButton $size={19} $across aria-label="Вправо"><Arrow dir="right" size={7} color="#444" /></ScrollButton>
      </HScroll>

      <SelectionBar>
        <Grip />
        <Field $w={128} $ml={1}>
          <FieldTitle htmlFor="rate">Частота проекта (Гц):</FieldTitle>
          <RateBox>
            <RateSelect id="rate"><option>96000</option></RateSelect>
          </RateBox>
        </Field>
        <Divider />
        <Snap>Прилипать к линейке <Check type="checkbox" /></Snap>
        <Field $ml={6}>
          <FieldTitle as="span">Начало выделения:</FieldTitle>
          <TimeField label="Начало выделения" />
        </Field>
        <Field $ml={7} $w={164}>
          <RadioRow>
            <Radio><RadioInput type="radio" name="end" defaultChecked />Конец</Radio>
            <Radio><RadioInput type="radio" name="end" />Длительность</Radio>
          </RadioRow>
          <TimeField label="Конец выделения" />
        </Field>
        <Divider />
        <Field $ml={6}>
          <FieldTitle as="span">Текущая позиция:</FieldTitle>
          <TimeField label="Текущая позиция" />
        </Field>
      </SelectionBar>
      <StatusBar>
        <StatusCell>Реальная частота: 96000 Гц</StatusCell>
      </StatusBar>

      <Watermark>
        <svg width="58" height="64" viewBox="4 1 54 60">
          <path d="M8 8q2-5 8-2l34 20q6 4 0 9L18 56q-8 4-10-4z" fill="none" stroke="#e09aa4" strokeWidth="7" strokeLinejoin="round" />
          <path d="M4.500 50q1 10 11 10" stroke="#777" fill="none" />
          <path d="M15 18l26 13l-26 17z" fill="#ea9a9e" />
          <path d="M15 14l28 15" stroke="#777" fill="none" />
          <path d="M15.500 34v16" stroke="#777" fill="none" strokeWidth="1.500" />
        </svg>
        <Brand>
          <BrandWord $c="#e09aa4">Видео</BrandWord>
          <BrandWord $c="#737373">Специалист</BrandWord>
          <BrandSite>andreygavriship.ru</BrandSite>
        </Brand>
      </Watermark>

      <Preferences />
    </Window>
  );
}
